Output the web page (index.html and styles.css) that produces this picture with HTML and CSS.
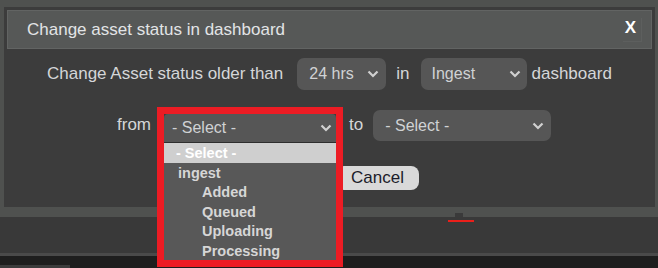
FILE: index.html
```html
<!DOCTYPE html>
<html>
<head>
<meta charset="utf-8">
<link rel="stylesheet" href="styles.css">
</head>
<body>
<div class="screen">
  <div class="frame">
    <div class="dialog">
      <div class="titlebar">
        <span class="title">Change asset status in dashboard</span>
        <span class="close">X</span>
      </div>
      <div class="row row1">
        <span class="lbl">Change Asset status older than</span>
        <div class="sel sel-hrs"><span>24 hrs</span><svg class="chev" width="12" height="8" viewBox="0 0 12 8"><polyline points="1.5,1.5 6,6 10.5,1.5" fill="none" stroke="#d0d0d0" stroke-width="2.2"/></svg></div>
        <span class="lbl lbl-in">in</span>
        <div class="sel sel-ingest"><span>Ingest</span><svg class="chev" width="12" height="8" viewBox="0 0 12 8"><polyline points="1.5,1.5 6,6 10.5,1.5" fill="none" stroke="#d0d0d0" stroke-width="2.2"/></svg></div>
        <span class="lbl lbl-dash">dashboard</span>
      </div>
      <div class="row row2">
        <span class="lbl">from</span>
        <div class="hl">
          <div class="sel sel-from"><span>- Select -</span><svg class="chev" width="12" height="8" viewBox="0 0 12 8"><polyline points="1.5,1.5 6,6 10.5,1.5" fill="none" stroke="#d0d0d0" stroke-width="2.2"/></svg></div>
          <div class="menu">
            <div class="opt opt-active">- Select -</div>
            <div class="opt opt-group">ingest</div>
            <div class="opt opt-sub">Added</div>
            <div class="opt opt-sub">Queued</div>
            <div class="opt opt-sub">Uploading</div>
            <div class="opt opt-sub">Processing</div>
          </div>
        </div>
        <span class="lbl lbl-to">to</span>
        <div class="sel sel-to"><span>- Select -</span><svg class="chev" width="12" height="8" viewBox="0 0 12 8"><polyline points="1.5,1.5 6,6 10.5,1.5" fill="none" stroke="#d0d0d0" stroke-width="2.2"/></svg></div>
      </div>
      <div class="row buttons">
        <button class="btn">OK</button>
        <button class="btn">Cancel</button>
      </div>
    </div>
    <div class="tabrow"><span class="tab"></span></div>
  </div>
  <div class="lower">
    <span class="redline"></span>
  </div>
  <div class="sep"></div>
  <div class="bottom"><span class="bottom-tab"></span></div>
</div>
</body>
</html>
```
FILE: styles.css
```css
* { box-sizing: border-box; }
html, body { margin: 0; padding: 0; }
body {
  background: #1e1e1e;
  font-family: "Liberation Sans", Arial, sans-serif;
  color: #d2d2d2;
}
.screen {
  width: 658px;
  height: 268px;
  overflow: hidden;
  display: flex;
  flex-direction: column;
}
.frame {
  background: #4f514f;
  padding: 7px 3px 0 4px;
}
.dialog {
  background: #3c3c3c;
  padding: 3px 3px 17px 3px;
}
.titlebar {
  height: 39px;
  background: #565857;
  border: 1px solid #626463;
  display: flex;
  align-items: center;
  justify-content: space-between;
  padding: 0 9px 0 19px;
}
.title {
  font-size: 17px;
  color: #e2e4e6;
}
.close {
  align-self: flex-start;
  margin-top: 7px;
  font-size: 17px;
  line-height: 19px;
  font-weight: bold;
  color: #ffffff;
  padding: 0 5px 4px 2px;
  border-right: 1px solid #5d5f5e;
  border-bottom: 1px solid #5d5f5e;
}
.row {
  display: flex;
  align-items: center;
}
.lbl {
  font-size: 17px;
  color: #d4d6d8;
}
.row1 {
  margin-top: 9px;
  height: 32px;
  padding-left: 40px;
}
.sel {
  display: flex;
  align-items: center;
  justify-content: space-between;
  background: #565656;
  font-size: 16px;
  color: #d0d2d4;
  border-radius: 7px;
}
.sel-hrs { width: 89px; height: 32px; margin-left: 14px; padding: 0 7px 0 12px; }
.lbl-in { margin-left: 10px; }
.sel-ingest { width: 106px; height: 32px; margin-left: 11px; padding: 0 6px 0 11px; }
.lbl-dash { margin-left: 5px; }
.row2 {
  margin-top: 17px;
  padding-left: 110px;
  height: 36px;
  align-items: flex-start;
}
.row2 .lbl { margin-top: 8px; }
.hl {
  position: relative;
  margin-left: 6px;
  border: 7px solid #ec1c24;
  border-bottom: 0;
}
.sel-from {
  width: 172px;
  height: 29px;
  border-radius: 4px 4px 0 0;
  border-bottom: 1px solid #2e2e2e;
  padding: 0 4px 0 8px;
}
.menu {
  position: absolute;
  left: -7px;
  top: 100%;
  width: 186px;
  border: 7px solid #ec1c24;
  border-top: 0;
  background: #585858;
  z-index: 2;
}
.opt {
  height: 19.5px;
  line-height: 20px;
  font-size: 14.5px;
  font-weight: bold;
  color: #d6d6d6;
}
.opt-active {
  background: #cfcfcf;
  color: #ffffff;
  padding-left: 12px;
}
.opt-group { padding-left: 14px; }
.opt-sub { padding-left: 38px; }
.lbl-to { margin-left: 6px; }
.row2 .lbl-to { margin-top: 8px; }
.sel-to {
  width: 178px;
  height: 31px;
  margin-left: 10px;
  margin-top: 3px;
  padding: 0 7px 0 12px;
}
.buttons {
  margin-top: 23px;
  padding-left: 254px;
  gap: 8px;
}
.btn {
  font-family: "Liberation Sans", Arial, sans-serif;
  font-size: 17px;
  color: #1c1c2a;
  background: #d9d9d9;
  border: 0;
  border-radius: 8px;
  height: 24px;
  padding: 0 15px;
  line-height: 24px;
}
.buttons .btn:first-child { width: 67px; }
.tabrow {
  height: 10px;
  display: flex;
  align-items: flex-end;
}
.tab {
  width: 8px;
  height: 4px;
  margin-left: 451px;
  background: #3a3a3a;
}
.lower {
  height: 36px;
  background: #393939;
  padding-top: 3px;
}
.redline {
  display: block;
  width: 26px;
  height: 2px;
  margin-left: 448px;
  background: #ea1f1a;
}
.sep {
  height: 3px;
  background: #4a4a4a;
}
.bottom {
  flex: 1;
  background: #1e1e1e;
  display: flex;
  align-items: flex-end;
}
.bottom-tab {
  width: 70px;
  height: 3px;
  background: #3c3c3c;
}
```
